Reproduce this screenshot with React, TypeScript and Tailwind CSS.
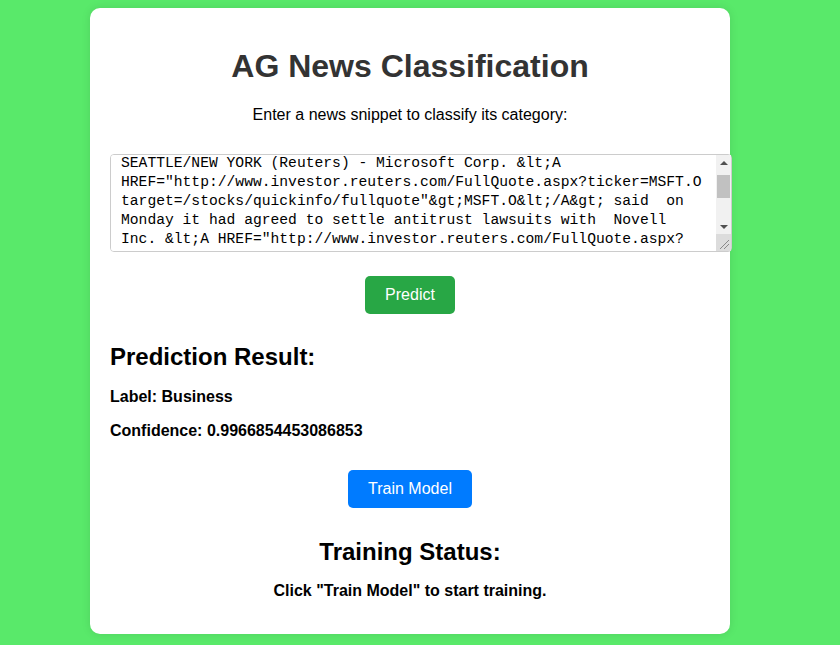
import { useEffect, useRef, useState } from 'react'

const SAMPLE_TEXT =
  'SEATTLE/NEW YORK (Reuters) - Microsoft Corp. &lt;A HREF="http://www.investor.reuters.com/FullQuote.aspx?ticker=MSFT.O target=/stocks/quickinfo/fullquote"&gt;MSFT.O&lt;/A&gt; said  on Monday it had agreed to settle antitrust lawsuits with  Novell Inc. &lt;A HREF="http://www.investor.reuters.com/FullQuote.aspx?ticker=NOVL.O target=/stocks/quickinfo/fullquote"&gt;NOVL.O&lt;/A&gt; and the  Computer and Communications Industry Association, paying a total of  $556 million to end the disputes.'

// track runs between the two arrow buttons
const TRACK = 49
const THUMB = 23

function FakeScrollbar({ offset }: { offset: number }) {
  return (
    <div className="pointer-events-none absolute top-[1px] right-[1px] bottom-[1px] flex w-[15px] flex-col bg-[#f1f1f1]">
      <div className="flex h-[15px] items-center justify-center">
        <div className="h-0 w-0 border-x-[4px] border-b-[4px] border-x-transparent border-b-[#505050]" />
      </div>
      <div className="relative h-[49px]">
        <div className="absolute left-[1px] h-[23px] w-[13px] bg-[#c1c1c1]" style={{ top: offset }} />
      </div>
      <div className="flex h-[15px] items-center justify-center">
        <div className="h-0 w-0 border-x-[4px] border-t-[4px] border-x-transparent border-t-[#505050]" />
      </div>
      <div className="flex flex-1 items-end justify-end bg-[#dcdcdc]">
        <svg width="12" height="12" viewBox="0 0 12 12" className="mb-[1px] mr-[1px]">
          <line x1="11" y1="2" x2="2" y2="11" stroke="#888" strokeWidth="1" />
          <line x1="11" y1="6" x2="6" y2="11" stroke="#888" strokeWidth="1" />
        </svg>
      </div>
    </div>
  )
}

export default function App() {
  const [text, setText] = useState(SAMPLE_TEXT)
  const [thumbTop, setThumbTop] = useState(5)
  const areaRef = useRef<HTMLTextAreaElement>(null)

  const syncThumb = () => {
    const el = areaRef.current
    if (!el) {
      return
    }
    const max = el.scrollHeight - el.clientHeight
    if (max <= 0) {
      setThumbTop(0)
      return
    }
    setThumbTop(Math.max(5, (el.scrollTop / max) * (TRACK - THUMB)))
  }

  useEffect(() => {
    if (areaRef.current) {
      areaRef.current.scrollTop = 11
    }
    syncThumb()
  }, [])

  return (
    <div className="min-h-screen bg-[#59e96a] pt-[8px] font-['Liberation_Sans',Arial,sans-serif]">
      <div className="ml-[90px] w-[640px] rounded-[10px] bg-white px-[20px] pt-[20px] pb-[34px] shadow-[0_0_10px_rgba(0,0,0,0.1)]">
        <h1 className="mt-[20px] text-center text-[32px] leading-[37px] font-bold text-[#333]">
          AG News Classification
        </h1>
        <p className="mt-[21px] text-center text-[16px] leading-[18px] text-black">
          Enter a news snippet to classify its category:
        </p>

        <div className="relative mt-[30px] w-[622px]">
          <textarea
            ref={areaRef}
            value={text}
            onChange={(e) => setText(e.target.value)}
            onScroll={syncThumb}
            className="block h-[98px] w-[622px] resize-none overflow-y-auto rounded-[4px] border border-[#ccc] bg-white py-[10px] pr-[25px] pl-[10px] font-['Liberation_Mono',monospace] text-[14.667px] leading-[19px] text-black outline-none"
          />
          <FakeScrollbar offset={thumbTop} />
        </div>

        <div className="mt-[24px] flex justify-center">
          <button className="h-[38px] rounded-[5px] bg-[#28a745] px-[20px] text-[16px] leading-[18px] text-white">
            Predict
          </button>
        </div>

        <h2 className="mt-[29px] text-[24px] leading-[28px] font-bold text-black">
          Prediction Result:
        </h2>
        <p className="mt-[17px] text-[16px] leading-[18px] font-bold text-black">
          Label: Business
        </p>
        <p className="mt-[16px] text-[16px] leading-[18px] font-bold text-black">
          Confidence: 0.9966854453086853
        </p>

        <div className="mt-[30px] flex justify-center">
          <button className="h-[38px] rounded-[5px] bg-[#007bff] px-[20px] text-[16px] leading-[18px] text-white">
            Train Model
          </button>
        </div>

        <h2 className="mt-[30px] text-center text-[24px] leading-[28px] font-bold text-black">
          Training Status:
        </h2>
        <p className="mt-[16px] text-center text-[16px] leading-[18px] font-bold text-black">
          Click "Train Model" to start training.
        </p>
      </div>
    </div>
  )
}
